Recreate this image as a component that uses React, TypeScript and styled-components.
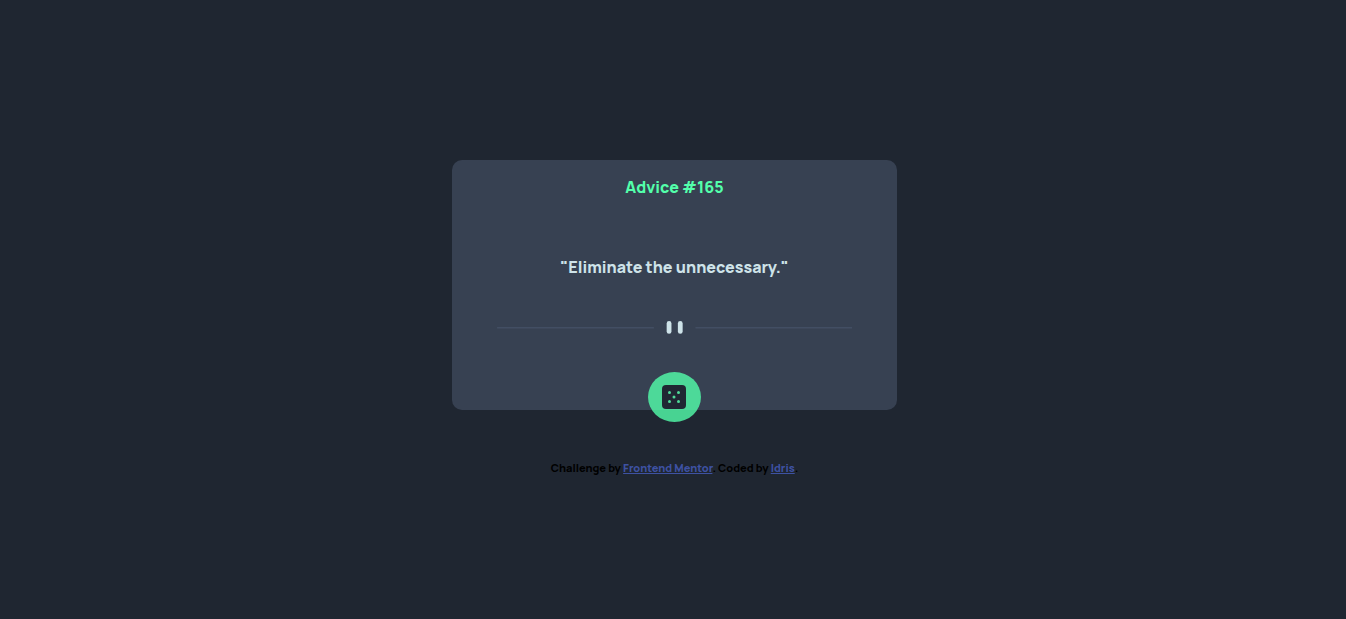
import React from "react";
import styled, { createGlobalStyle } from "styled-components";

const GlobalStyle = createGlobalStyle`
  * { box-sizing: border-box; }
  body {
    margin: 0;
    background: #1f2631;
    font-family: Manrope, Inter, "Liberation Sans", sans-serif;
    font-weight: 800;
  }
`;

const Page = styled.div`
  min-height: 100vh;
  padding: 160px 0 0 3px;
  display: flex;
  flex-direction: column;
  align-items: center;
`;

const Card = styled.main`
  width: 33vw;
  min-width: 300px;
  padding-top: 16px;
  display: flex;
  flex-direction: column;
  align-items: center;
  text-align: center;
  background: #374152;
  border-radius: 10px;
`;

const Title = styled.h1`
  margin: 0;
  font-size: 16px;
  font-weight: 800;
  line-height: 22px;
  color: #53ffab;
`;

const Quote = styled.p`
  margin: 58px 20px 43px;
  font-size: 16px;
  line-height: 22px;
  color: #cee3e9;
`;

const Divider = styled.svg`
  display: block;
  width: 80%;
  height: auto;
`;

const DiceButton = styled.button`
  width: 53px;
  height: 50px;
  margin: 38px 0 -12px;
  padding: 0 1px 0 0;
  display: grid;
  place-items: center;
  border: 0;
  border-radius: 50%;
  background: rgba(83, 255, 171, 0.8);
  cursor: pointer;
`;

const Footer = styled.footer`
  margin-top: 50px;
  font-size: 11px;
  line-height: 16px;
  color: #000;
  text-align: center;
`;

const FooterLink = styled.a`
  color: #3e52a3;
`;

const pips = [
  [7.5, 7.5],
  [16.5, 7.5],
  [12, 12],
  [7.5, 16.5],
  [16.5, 16.5],
];

export default function App() {
  return (
    <>
      <GlobalStyle />
      <Page>
        <Card>
          <Title>Advice #165</Title>
          <Quote>"Eliminate the unnecessary."</Quote>
          <Divider viewBox="0 0 444 16" aria-hidden="true">
            <path fill="#4f5d74" d="M0 8h196v1H0zM248 8h196v1H248z" />
            <g fill="#cee3e9">
              <rect x="212" width="6" height="16" rx="3" />
              <rect x="226" width="6" height="16" rx="3" />
            </g>
          </Divider>
          <DiceButton type="button" aria-label="New advice">
            <svg width="24" height="24" viewBox="0 0 24 24" aria-hidden="true">
              <rect width="24" height="24" rx="4" fill="#202733" />
              {pips.map(([x, y]) => (
                <circle key={`${x}-${y}`} cx={x} cy={y} r="1.5" fill="#4fdb98" />
              ))}
            </svg>
          </DiceButton>
        </Card>
        <Footer>
          Challenge by <FooterLink href="https://www.frontendmentor.io">Frontend Mentor</FooterLink>. Coded by{" "}
          <FooterLink href="#">Idris</FooterLink>.
        </Footer>
      </Page>
    </>
  );
}
